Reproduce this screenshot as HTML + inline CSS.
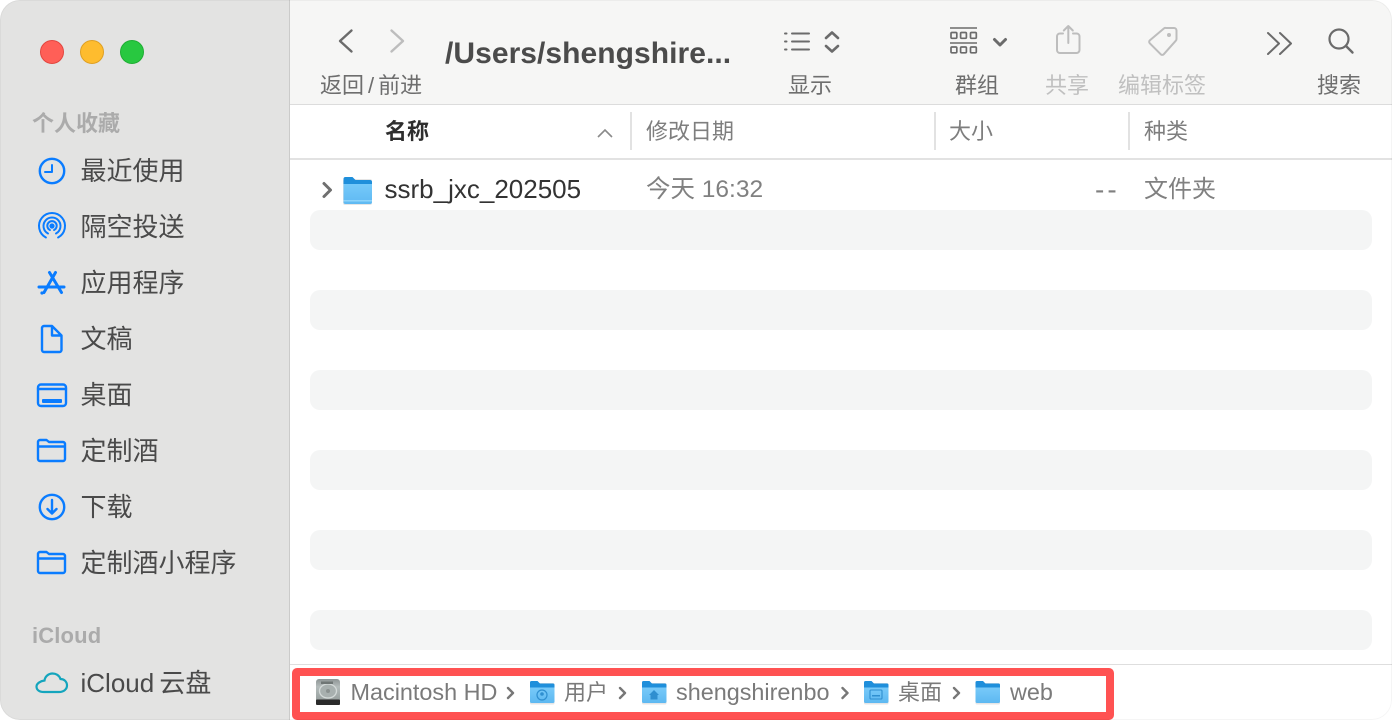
<!DOCTYPE html>
<html><head><meta charset="utf-8">
<style>
html,body{margin:0;padding:0;width:1392px;height:720px;overflow:hidden;background:#fff}
*{box-sizing:border-box}
body{font-family:"Liberation Sans","Noto Sans CJK SC",sans-serif;position:relative}
.a{position:absolute;white-space:nowrap;line-height:1}
svg{position:absolute;overflow:visible}
#win{position:absolute;left:0;top:0;width:1392px;height:720px;border-radius:20px;overflow:hidden;background:#fff}
.frame{position:absolute;left:0;top:0;width:1392px;height:720px;border-radius:20px;border:1px solid rgba(0,0,0,.04)}
.side{position:absolute;left:0;top:0;width:290px;height:720px;background:#e3e3e2;border-right:1px solid #cbcbca}
.tool{position:absolute;left:290px;top:0;width:1102px;height:105px;background:#f6f6f5;border-bottom:1px solid #dcdcdc}
.dot{position:absolute;top:40px;width:24px;height:24px;border-radius:50%}
.s{font-size:26px;color:#4a4a4a;left:80.5px}
.h{font-size:22px;font-weight:700;color:#ababab;left:32px}
.l{font-size:22px;color:#6e6e6e}
.g{color:#c0c0c0}
.hd{font-size:22px;color:#7e7e7e;top:121px}
.sep{position:absolute;top:112px;width:2px;height:38px;background:#e2e2e2}
.st{position:absolute;left:310px;width:1062px;height:40px;background:#f4f5f5;border-radius:10px}
.p{font-size:23.4px;color:#7a7a7a;top:681px}
.pc{font-size:22px;color:#7a7a7a;top:682px}
.b{fill:none;stroke:#0a7cff;stroke-width:2.4;stroke-linecap:round;stroke-linejoin:round}
.t{fill:none;stroke:#6b6b6b;stroke-width:2;stroke-linecap:round;stroke-linejoin:round}
.tg{fill:none;stroke:#bdbdbd;stroke-width:2;stroke-linecap:round;stroke-linejoin:round}
</style></head><body>
<div id="win">
<div class="side"></div>
<div class="tool"></div>
<div class="dot" style="left:40px;background:#ff5f57;border:1px solid #e2463f"></div>
<div class="dot" style="left:80px;background:#febc2e;border:1px solid #dfa023"></div>
<div class="dot" style="left:120px;background:#28c840;border:1px solid #1fae33"></div>

<div class="a h" style="top:113px">个人收藏</div>
<div class="a s" style="top:158px">最近使用</div>
<div class="a s" style="top:214px">隔空投送</div>
<div class="a s" style="top:270px">应用程序</div>
<div class="a s" style="top:326px">文稿</div>
<div class="a s" style="top:382px">桌面</div>
<div class="a s" style="top:438px">定制酒</div>
<div class="a s" style="top:494px">下载</div>
<div class="a s" style="top:550px">定制酒小程序</div>
<div class="a h" style="top:625px;letter-spacing:.15px">iCloud</div>
<div class="a s" style="top:670px;word-spacing:-2px">iCloud 云盘</div>

<svg style="left:0;top:0" width="80" height="720" viewBox="0 0 80 720">
<circle class="b" cx="52" cy="171" r="12.200"/><path class="b" style="stroke-width:2" d="M52 165v7h-7"/>
<circle cx="52" cy="226" r="2.600" fill="#0a7cff"/>
<path class="b" style="stroke-width:2" d="M45.900 237.500a13 13 0 1 1 12.200 0M48 233.500a8.500 8.500 0 1 1 8 0M49.900 230a4.700 4.700 0 1 1 4.200 0"/>
<path class="b" style="stroke-width:3" d="M49.500 272.500l12 20M55.500 272.500l-11.500 20M39 287h25"/>
<circle cx="42" cy="293" r="1.600" fill="#0a7cff"/>
<path class="b" d="M42 328a2 2 0 0 1 2-2h8l9.500 9.500V350a2 2 0 0 1-2 2H44a2 2 0 0 1-2-2zM52 326.500v9h9"/>
<rect class="b" x="38" y="384.500" width="28" height="21.500" rx="3"/><path class="b" d="M38 389h28"/><rect x="42" y="399" width="20" height="4" rx="1" fill="#0a7cff"/>
<path class="b" d="M38 442a2 2 0 0 1 2-2h6.500l2.500 2h14a2 2 0 0 1 2 2v15a2 2 0 0 1-2 2H40a2 2 0 0 1-2-2zM38 446.500h27"/>
<circle class="b" cx="52" cy="507" r="12.200"/><path class="b" d="M52 500v13M47.500 509l4.500 4.500 4.500-4.500"/>
<path class="b" d="M38 554a2 2 0 0 1 2-2h6.500l2.500 2h14a2 2 0 0 1 2 2v15a2 2 0 0 1-2 2H40a2 2 0 0 1-2-2zM38 558.500h27"/>
<path d="M44 692h15c5 0 8-3 8-6.500 0-4-3-6.500-6.500-6.500-1.500-4-5-5.500-8-5.500-4 0-7.500 3-8 7-4 .5-8 3-8 6 0 3.500 3 5.500 7.500 5.500z" fill="none" stroke="#14a5bd" stroke-width="2.200"/>
</svg>

<svg style="left:0;top:0" width="1392" height="105" viewBox="0 0 1392 105">
<path class="t" style="stroke-width:2.400" d="M351.500 30.500L340 41l11.500 10.500"/>
<path class="tg" style="stroke-width:2.400" d="M391.500 30.500L403 41l-11.500 10.500"/>
<path class="t" d="M792 33.500h17M792 41.500h17M792 49.500h17M785 33.500h1.500M785 41.500h1.500M785 49.500h1.500"/>
<path class="t" style="stroke-width:2.600" d="M826 38l6-5.500 6 5.500M826 46l6 5.500 6-5.500"/>
<path class="t" style="stroke-width:1.600;stroke-linecap:butt" d="M950 28h27M950 43h27"/>
<g class="t" style="stroke-width:1.700"><rect x="951" y="32.500" width="5.800" height="5.800" rx="1"/><rect x="960.600" y="32.500" width="5.800" height="5.800" rx="1"/><rect x="970.500" y="32.500" width="5.800" height="5.800" rx="1"/><rect x="951" y="47" width="5.800" height="5.800" rx="1"/><rect x="960.600" y="47" width="5.800" height="5.800" rx="1"/><rect x="970.500" y="47" width="5.800" height="5.800" rx="1"/></g>
<path class="t" style="stroke-width:3" d="M994.500 39.500l5.500 5.500 5.500-5.500"/>
<path class="tg" d="M1063 33.500h-3a3 3 0 0 0-3 3v13.500a3 3 0 0 0 3 3h16.500a3 3 0 0 0 3-3V36.500a3 3 0 0 0-3-3H1073M1068.300 43V26.500M1063.800 30.500l4.500-4.500 4.500 4.500"/>
<path class="tg" d="M1166 28h8a2.500 2.500 0 0 1 2.500 2.500v8.500a2.500 2.500 0 0 1-.8 1.800l-12 13.500a2 2 0 0 1-2.900 0l-11-11a2 2 0 0 1 0-2.900l14.200-12a2.500 2.500 0 0 1 2-.4z"/><circle cx="1169" cy="35" r="2" fill="#bdbdbd"/>
<path class="t" d="M1268 33l11 10.500-11 10.500M1280 33l11 10.500-11 10.500"/>
<circle class="t" cx="1339" cy="39" r="9.500" style="stroke-width:2.200"/><path class="t" style="stroke-width:2.400" d="M1346 46l6.500 6.500"/>
</svg>

<div class="a" style="left:445px;top:39px;font-size:30px;font-weight:700;color:#4b4b4b;letter-spacing:.05px">/Users/shengshire...</div>
<div class="a l" style="left:320px;top:75px">返回<span style="margin:0 4px">/</span>前进</div>
<div class="a l" style="left:788px;top:75px">显示</div>
<div class="a l" style="left:955px;top:75px">群组</div>
<div class="a l g" style="left:1045px;top:75px">共享</div>
<div class="a l g" style="left:1118px;top:75px">编辑标签</div>
<div class="a l" style="left:1317px;top:75px">搜索</div>

<div class="a" style="left:385px;top:121px;font-size:22px;font-weight:700;color:#2e2e2e">名称</div>
<svg style="left:0;top:0" width="700" height="160"><path d="M598 137l7-7 7 7" fill="none" stroke="#8a8a8a" stroke-width="1.600"/></svg>
<div class="sep" style="left:630px"></div>
<div class="a hd" style="left:646px">修改日期</div>
<div class="sep" style="left:934px"></div>
<div class="a hd" style="left:949px">大小</div>
<div class="sep" style="left:1128px"></div>
<div class="a hd" style="left:1144px">种类</div>
<div style="position:absolute;left:290px;top:158px;width:1102px;height:2px;background:#e2e2e2"></div>

<div class="st" style="top:210px"></div>
<div class="st" style="top:290px"></div>
<div class="st" style="top:370px"></div>
<div class="st" style="top:450px"></div>
<div class="st" style="top:530px"></div>
<div class="st" style="top:610px"></div>

<svg style="left:0;top:0" width="400" height="215">
<defs>
<linearGradient id="fb" x1="0" y1="0" x2="0" y2="1"><stop offset="0" stop-color="#75c9fa"/><stop offset="1" stop-color="#5fb9f2"/></linearGradient>
</defs>
<path d="M324 183.500l6.500 6.500-6.500 6.500" fill="none" stroke="#6f6f6f" stroke-width="3" stroke-linecap="round" stroke-linejoin="round"/>
<rect x="343" y="179" width="29" height="26" rx="2" fill="#000" opacity=".1"/>
<path d="M343.500 179a2 2 0 0 1 2-2h7l3 3h14.500a2 2 0 0 1 2 2v6h-28.500z" fill="#1f8fdb"/>
<path d="M343.500 184h28.500v18a2 2 0 0 1-2 2h-24.500a2 2 0 0 1-2-2z" fill="url(#fb)"/>
<rect x="343.500" y="200" width="28.500" height="1.500" fill="#8ed4fb"/>
</svg>
<div class="a" style="left:384.500px;top:176px;font-size:26px;color:#333">ssrb_jxc_202505</div>
<div class="a" style="left:646px;top:178px;font-size:24.500px;color:#808080">今天 16:32</div>
<div class="a" style="left:1095px;top:176px;font-size:28px;letter-spacing:3px;color:#808080">--</div>
<div class="a" style="left:1144px;top:178px;font-size:24px;color:#808080">文件夹</div>

<div style="position:absolute;left:290px;top:664px;width:1102px;height:1px;background:#dedede"></div>
<div style="position:absolute;left:292px;top:668px;width:822px;height:52px;border:8px solid #ff5252;border-radius:5px;background:#fff"></div>

<svg style="left:0;top:0" width="1392" height="720">
<defs>
<linearGradient id="hdg" x1="0" y1="0" x2="0" y2="1"><stop offset="0" stop-color="#8d9494"/><stop offset=".3" stop-color="#b4bcbb"/><stop offset="1" stop-color="#8f9695"/></linearGradient>
<linearGradient id="pb" x1="0" y1="0" x2="0" y2="1"><stop offset="0" stop-color="#78caf9"/><stop offset="1" stop-color="#5db8f1"/></linearGradient>
<g id="pf">
<rect x="530" y="683" width="24.500" height="21.500" rx="1.500" fill="#000" opacity=".1"/>
<path d="M530 682.500a1.500 1.500 0 0 1 1.500-1.500h6l2.500 2.500h13a1.500 1.500 0 0 1 1.500 1.500v4h-24.500z" fill="#1f8fdb"/>
<path d="M530 687.500h24.500v14a1.500 1.500 0 0 1-1.500 1.500h-21.500a1.500 1.500 0 0 1-1.500-1.500z" fill="url(#pb)"/>
</g>
</defs>
<rect x="316" y="679" width="24" height="26" rx="3" fill="url(#hdg)"/>
<ellipse cx="328" cy="691" rx="8.500" ry="7" fill="#a8b0af" stroke="#d4dad9" stroke-width="1.300"/>
<circle cx="328" cy="691" r="2" fill="#8a9190"/>
<rect x="321" y="681.500" width="12" height="2.500" fill="#6f7675"/>
<rect x="316" y="699.500" width="24" height="5.500" rx="1" fill="#2b2b2b"/>
<use href="#pf"/>
<circle cx="542" cy="695" r="5" fill="none" stroke="#2f8fd0" stroke-width="1.200"/><circle cx="542" cy="694" r="1.800" fill="#2f8fd0"/>
<g transform="translate(112 0)"><use href="#pf"/><path d="M537 695l5-5 5 5h-1.500v4.500h-7V695z" fill="#2f8fd0"/></g>
<g transform="translate(334 0)"><use href="#pf"/><rect x="536" y="690" width="12" height="9" rx="1" fill="none" stroke="#2f8fd0" stroke-width="1.100"/><rect x="538" y="695" width="8" height="1.500" fill="#2f8fd0"/></g>
<g transform="translate(445.500 0)"><use href="#pf"/></g>
<g fill="none" stroke="#777" stroke-width="2.400" stroke-linecap="round" stroke-linejoin="round">
<path d="M508 688l5 5-5 5M620 688l5 5-5 5M842.500 688l5 5-5 5M954 688l5 5-5 5"/>
</g>
</svg>
<div class="a p" style="left:350.500px">Macintosh HD</div>
<div class="a pc" style="left:564px">用户</div>
<div class="a p" style="left:676px">shengshirenbo</div>
<div class="a pc" style="left:898px">桌面</div>
<div class="a p" style="left:1010px">web</div>
<div class="frame"></div>
</div>
</body></html>
